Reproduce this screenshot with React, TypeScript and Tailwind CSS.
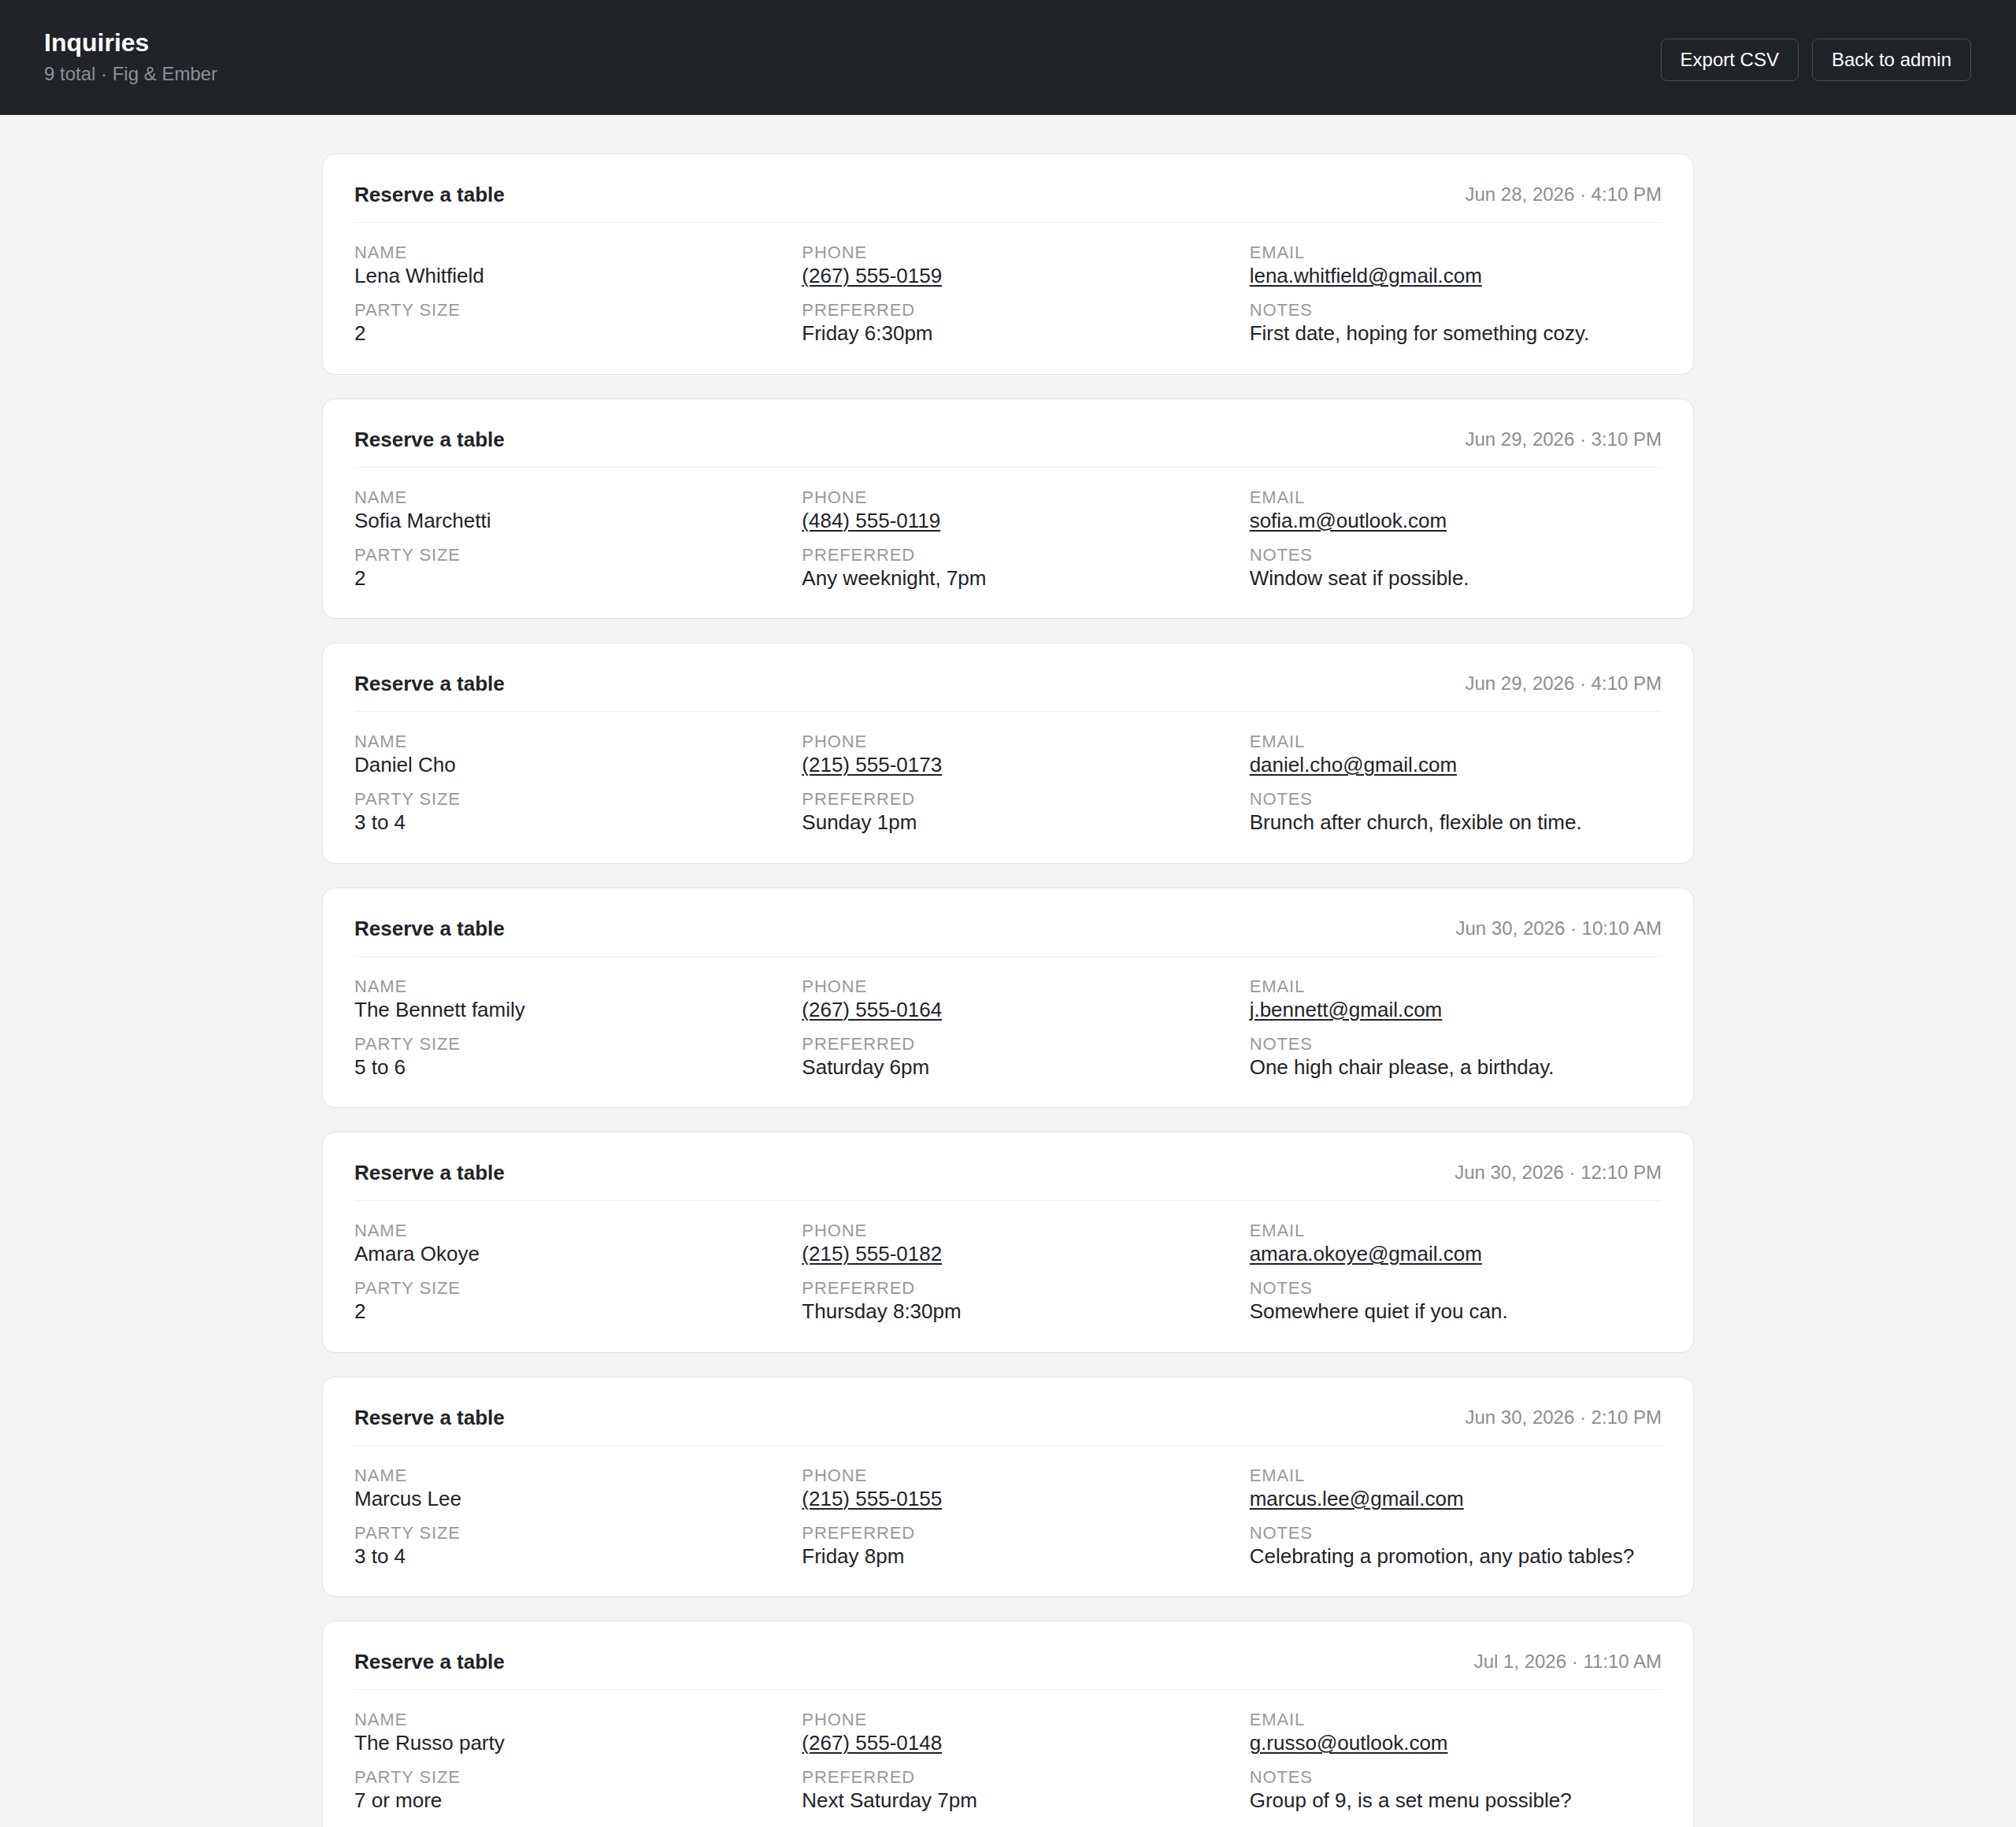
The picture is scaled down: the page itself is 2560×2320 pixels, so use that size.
import React from "react";

type Inquiry = {
  id: number;
  date: string;
  name: string;
  phone: string;
  email: string;
  party: string;
  preferred: string;
  notes: string;
};

const inquiries: Inquiry[] = [
  { id: 1, date: "Jun 28, 2026 · 4:10 PM", name: "Lena Whitfield", phone: "(267) 555-0159", email: "lena.whitfield@gmail.com", party: "2", preferred: "Friday 6:30pm", notes: "First date, hoping for something cozy." },
  { id: 2, date: "Jun 29, 2026 · 3:10 PM", name: "Sofia Marchetti", phone: "(484) 555-0119", email: "sofia.m@outlook.com", party: "2", preferred: "Any weeknight, 7pm", notes: "Window seat if possible." },
  { id: 3, date: "Jun 29, 2026 · 4:10 PM", name: "Daniel Cho", phone: "(215) 555-0173", email: "daniel.cho@gmail.com", party: "3 to 4", preferred: "Sunday 1pm", notes: "Brunch after church, flexible on time." },
  { id: 4, date: "Jun 30, 2026 · 10:10 AM", name: "The Bennett family", phone: "(267) 555-0164", email: "j.bennett@gmail.com", party: "5 to 6", preferred: "Saturday 6pm", notes: "One high chair please, a birthday." },
  { id: 5, date: "Jun 30, 2026 · 12:10 PM", name: "Amara Okoye", phone: "(215) 555-0182", email: "amara.okoye@gmail.com", party: "2", preferred: "Thursday 8:30pm", notes: "Somewhere quiet if you can." },
  { id: 6, date: "Jun 30, 2026 · 2:10 PM", name: "Marcus Lee", phone: "(215) 555-0155", email: "marcus.lee@gmail.com", party: "3 to 4", preferred: "Friday 8pm", notes: "Celebrating a promotion, any patio tables?" },
  { id: 7, date: "Jul 1, 2026 · 11:10 AM", name: "The Russo party", phone: "(267) 555-0148", email: "g.russo@outlook.com", party: "7 or more", preferred: "Next Saturday 7pm", notes: "Group of 9, is a set menu possible?" },
  { id: 8, date: "Jul 1, 2026 · 3:40 PM", name: "Priya Shah", phone: "(484) 555-0126", email: "priya.shah@gmail.com", party: "2", preferred: "Wednesday 7:30pm", notes: "Anniversary dinner." },
  { id: 9, date: "Jul 2, 2026 · 9:20 AM", name: "Owen Fitzgerald", phone: "(215) 555-0191", email: "owen.fitz@outlook.com", party: "3 to 4", preferred: "Sunday 6pm", notes: "One guest is vegetarian." },
];

function Field({ label, children }: { label: string; children: React.ReactNode }) {
  return (
    <div className="flex flex-col">
      <span className="text-[22px] leading-[27px] tracking-[0.9px] uppercase text-[#9a9a9a]">{label}</span>
      <span className="text-[26px] leading-[32px] text-[#1f2328]">{children}</span>
    </div>
  );
}

function InquiryCard({ item }: { item: Inquiry }) {
  return (
    <div className="bg-white border-[1.5px] border-[#e2e2e2] rounded-[16px] px-[40px] pb-[35.5px]">
      <div className="flex items-center justify-between pt-[35px] pb-[19px] border-b-[1.5px] border-[#eeeeee]">
        <h2 className="text-[26px] leading-[32px] font-bold text-[#1f2328]">Reserve a table</h2>
        <span className="text-[24px] leading-[32px] text-[#8e8e8e]">{item.date}</span>
      </div>
      <div className="grid grid-cols-3 gap-x-[45px] gap-y-[14px] pt-[24px]">
        <Field label="Name">{item.name}</Field>
        <Field label="Phone">
          <a href={`tel:${item.phone}`} className="underline decoration-[1.5px] underline-offset-[3px]">
            {item.phone}
          </a>
        </Field>
        <Field label="Email">
          <a href={`mailto:${item.email}`} className="underline decoration-[1.5px] underline-offset-[3px]">
            {item.email}
          </a>
        </Field>
        <Field label="Party size">{item.party}</Field>
        <Field label="Preferred">{item.preferred}</Field>
        <Field label="Notes">{item.notes}</Field>
      </div>
    </div>
  );
}

export default function App() {
  return (
    <div className="min-h-screen bg-[#f4f4f4] font-['Liberation_Sans',Arial,sans-serif]">
      <header className="h-[146px] bg-[#202327] flex items-start justify-between pl-[56px] pr-[57px] pt-[34px]">
        <div>
          <h1 className="text-[32px] leading-[40px] font-bold text-white">Inquiries</h1>
          <p className="text-[24px] leading-[32px] mt-[4px] text-[#8b9096]">9 total · Fig &amp; Ember</p>
        </div>
        <div className="flex gap-[17px] mt-[15px]">
          <button className="h-[54px] px-[24px] border-[1.5px] border-[#4b4f55] rounded-[8px] text-[24px] text-white">
            Export CSV
          </button>
          <button className="h-[54px] px-[24px] border-[1.5px] border-[#4b4f55] rounded-[8px] text-[24px] text-white">
            Back to admin
          </button>
        </div>
      </header>

      <main className="w-[1742px] mx-auto pt-[49px] pb-[48px] flex flex-col gap-[30px]">
        {inquiries.map((item) => (
          <InquiryCard key={item.id} item={item} />
        ))}
      </main>
    </div>
  );
}
